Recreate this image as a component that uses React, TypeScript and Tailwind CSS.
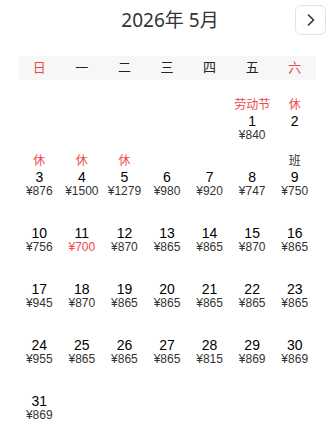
const weekdays = ["日", "一", "二", "三", "四", "五", "六"];

type Day = { d: number; price: string; tag?: string; work?: boolean; low?: boolean };

const days: Day[] = [
  { d: 1, price: "¥840", tag: "劳动节" },
  { d: 2, price: "", tag: "休" },
  { d: 3, price: "¥876", tag: "休" },
  { d: 4, price: "¥1500", tag: "休" },
  { d: 5, price: "¥1279", tag: "休" },
  { d: 6, price: "¥980" },
  { d: 7, price: "¥920" },
  { d: 8, price: "¥747" },
  { d: 9, price: "¥750", tag: "班", work: true },
  { d: 10, price: "¥756" },
  { d: 11, price: "¥700", low: true },
  { d: 12, price: "¥870" },
  { d: 13, price: "¥865" },
  { d: 14, price: "¥865" },
  { d: 15, price: "¥870" },
  { d: 16, price: "¥865" },
  { d: 17, price: "¥945" },
  { d: 18, price: "¥870" },
  { d: 19, price: "¥865" },
  { d: 20, price: "¥865" },
  { d: 21, price: "¥865" },
  { d: 22, price: "¥865" },
  { d: 23, price: "¥865" },
  { d: 24, price: "¥955" },
  { d: 25, price: "¥865" },
  { d: 26, price: "¥865" },
  { d: 27, price: "¥865" },
  { d: 28, price: "¥815" },
  { d: 29, price: "¥869" },
  { d: 30, price: "¥869" },
  { d: 31, price: "¥869" },
];

const blanks = 5;

export default function App() {
  return (
    <div className="w-[334px] h-[435px] bg-white font-['Liberation_Sans','Noto_Sans_CJK_SC',sans-serif] text-[#222]">
      <div className="relative flex h-[40px] items-center justify-center">
        <span className="pl-[6px] font-['Noto_Sans','Noto_Sans_CJK_SC',sans-serif] text-[19px] text-[#333]">2026年 5月</span>
        <button className="absolute right-[8px] top-[5px] flex h-[30px] w-[31px] items-center justify-center rounded-[6px] border border-[#e2e2e2] bg-white">
          <svg width="12" height="14" viewBox="0 0 12 14" fill="none">
            <path d="M3.5 2 L8.5 7 L3.5 12" stroke="#333" strokeWidth="1.6" strokeLinecap="round" strokeLinejoin="round" />
          </svg>
        </button>
      </div>
      <div className="mx-[18px] mt-[16px] grid h-[24px] grid-cols-7 items-center bg-[#f7f7f7] text-[13px]">
        {weekdays.map((w, i) => (
          <div key={w} className={`text-center ${i === 0 || i === 6 ? "text-[#f04848]" : "text-[#222]"}`}>
            {w}
          </div>
        ))}
      </div>
      <div className="mx-[18px] mt-[17px] grid grid-cols-7">
        {Array.from({ length: blanks }).map((_, i) => (
          <div key={`b${i}`} className="h-[56px]" />
        ))}
        {days.map((day) => (
          <div key={day.d} className="flex h-[56px] flex-col items-center">
            <div
              className={`h-[16px] text-[12px] leading-[16px] ${day.work ? "text-[#333]" : "text-[#f04848]"}`}
            >
              {day.tag ?? ""}
            </div>
            <div className="text-[14px] leading-[16px] text-black">{day.d}</div>
            <div className={`text-[12px] leading-[13px] ${day.low ? "text-[#f04848]" : "text-[#333]"}`}>
              {day.price}
            </div>
          </div>
        ))}
      </div>
    </div>
  );
}
